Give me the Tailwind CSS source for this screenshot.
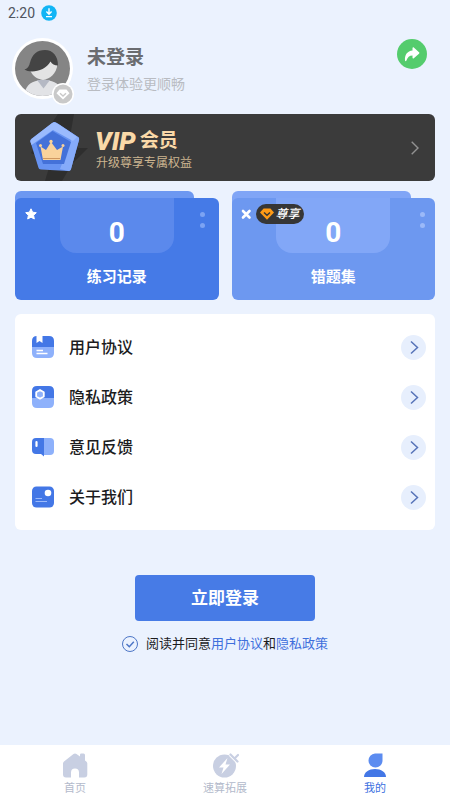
<!DOCTYPE html>
<html lang="zh-CN">
<head>
<meta charset="utf-8">
<meta name="viewport" content="width=device-width, initial-scale=1">
<title>我的</title>
<script src="https://cdn.jsdelivr.net/npm/@tailwindcss/browser@4"></script>
</head>
<body class="flex min-h-screen flex-col bg-[#ebf2fe] font-['Roboto','Noto_Sans_CJK_SC',sans-serif] text-[#1c1c1e]">

<div class="flex h-[26px] items-center gap-1.5 px-2 text-sm text-[#50555e]">
  <span>2:20</span>
  <svg class="size-4" viewBox="0 0 16 16" aria-hidden="true"><circle cx="8" cy="8" r="7.8" fill="#12b5f5"/><path d="M8 3.200v5.600M5.400 6.600 8 9.200l2.600-2.600M5 11.600h6" fill="none" stroke="#fff" stroke-width="1.400"/></svg>
</div>

<main class="flex flex-1 flex-col px-[15px]">
  <header class="flex items-start pt-3">
    <div class="relative -ml-[3px] size-[61px] shrink-0">
      <svg class="size-full" viewBox="0 0 61 61" role="img" aria-label="头像">
        <defs><clipPath id="face"><circle cx="30.500" cy="30.500" r="27.500"/></clipPath></defs>
        <circle cx="30.500" cy="30.500" r="30.500" fill="#fff"/>
        <g clip-path="url(#face)">
          <rect width="61" height="61" fill="#858585"/>
          <path d="M12 61c0-11 5-17 14-18.500l5-1.500 6 1.500C46 44 51 50 51 61z" fill="#e2e3e6"/>
          <path d="M25 42h13l-6.500 8.500z" fill="#b5b9c4"/>
          <path d="M17 29c2 8 7.500 12.500 14 12.500S44.500 36 45.500 26l-8-7-18 3z" fill="#e3e3e3"/>
          <path d="M12.500 31.500c3.500-1 4.500-3.500 5.500-7 2-8 7-12.500 15-12.500s13 6 13 15.500c-3.500 0-6-1.500-7.500-4C35 30 27 33.500 20 33.500c-3 0-6-.8-7.500-2z" fill="#444"/>
        </g>
      </svg>
      <svg class="absolute -right-px -bottom-1.5 size-[22px]" viewBox="0 0 22 22" aria-hidden="true"><circle cx="11" cy="11" r="11" fill="#fff"/><circle cx="11" cy="11" r="9.500" fill="#c9c9c9"/><path d="M7.500 6.500h7l3 3.700-6.500 6.300-6.500-6.300z" fill="#fff"/><path d="m8 10.300 3 2.700 3-2.700" fill="none" stroke="#c9c9c9" stroke-width="1.400"/></svg>
    </div>
    <div class="ml-3.5 flex-1 pt-1.5">
      <h1 class="text-[19px] leading-7 font-bold text-[#6a6c70]">未登录</h1>
      <p class="text-sm leading-6 text-[#b9bcc2]">登录体验更顺畅</p>
    </div>
    <button type="button" aria-label="分享" class="mt-px mr-2 size-[30px] rounded-full bg-[#54cc6d]">
      <svg class="size-full" viewBox="0 0 30 30" aria-hidden="true"><path d="M15.500 9.200c0-.8.700-1.100 1.300-.6l5.200 4.700c.5.400.5 1 0 1.400l-5.200 4.600c-.6.500-1.300.2-1.300-.6v-2.200c-3.300 0-4.800 1.800-6.200 5.300-.3.600-1.200.5-1.300-.2-.5-5.500 2.300-9.600 7.500-10z" fill="#fff"/></svg>
    </button>
  </header>

  <a href="#vip" class="mt-[15px] flex h-[67px] items-center overflow-hidden rounded-md bg-[#3b3b3b]">
    <svg class="h-[67px] w-20 shrink-0" viewBox="0 0 80 67" aria-hidden="true">
      <path d="M43 0h16l-6 34h20L57 50 47 67H30l6-20-20-8z" fill="#2e2e2e"/>
      <path d="M38 8.500c1-.7 2.500-.6 3.500.2L63 23c1 .7 1.400 1.900 1 3l-8 29c-.4 1.400-1.400 2-2.700 2L26 55.500c-1.400 0-2.300-.8-2.600-2L15.500 28c-.4-1.300 0-2.400 1-3.200z" fill="#6793f2"/>
      <path d="M42 9 63 23c1 .7 1.400 1.900 1 3l-8 29c-.4 1.400-1.400 2-2.700 2L45 55l11-29z" fill="#86abfa"/>
      <path d="M37 9 16.500 25c-1 .8-1.400 1.900-1 3l1 3L38 16l20 11 4-4L41.500 9c-1.500-1-3.200-1-4.500 0z" fill="#9abafd"/>
      <path d="M37.500 17 56 28l-7 22H28l-7-21z" fill="#4471d9"/>
      <path d="m25.500 32.500 5.500 3.500 5-8 6 8 6-3.500-2.500 13.500H28z" fill="#f9d29b"/>
      <circle cx="25.500" cy="31.500" r="1.500" fill="#f9d29b"/><circle cx="36" cy="27.500" r="1.700" fill="#f9d29b"/><circle cx="48" cy="31.500" r="1.500" fill="#f9d29b"/>
      <path d="M28 44.500h17" stroke="#cf9760" stroke-width="1"/>
    </svg>
    <div class="flex-1 pt-1.5">
      <p class="flex items-center gap-1 text-[#fad9a8]"><span class="text-[26px] leading-6 font-black italic">VIP</span><span class="text-[19px] leading-6 font-bold">会员</span></p>
      <p class="pl-px text-xs leading-5 text-[#ccb590]">升级尊享专属权益</p>
    </div>
    <svg class="mr-4 h-3.5 w-2" viewBox="0 0 8 14" fill="none" stroke="#929292" stroke-width="1.400" aria-hidden="true"><path d="m.7.700 6.300 6.300-6.300 6.300"/></svg>
  </a>

  <section class="mt-2.5 grid grid-cols-2 gap-[13px] text-white">
    <a href="#records" class="block">
      <div class="h-3.5 w-[88%] rounded-t-md bg-[#6d98f1]"></div>
      <div class="relative -mt-[7px] flex h-[102px] flex-col items-center rounded-md bg-[#457ae7]">
        <div class="flex h-[55px] w-[56%] items-center justify-center rounded-b-2xl bg-[#5b89ec] pt-3.5 text-[28px] leading-8 font-bold">0</div>
        <p class="mt-3 text-[15px] leading-6 font-bold">练习记录</p>
        <svg class="absolute top-2.5 left-2.5 size-3" viewBox="0 0 12 12" aria-hidden="true"><path d="m6 .8 1.600 3.400 3.700.5-2.700 2.600.7 3.700L6 9.200 2.700 11l.7-3.700L.7 4.700l3.700-.5z" fill="#fff" stroke="#fff" stroke-linejoin="round"/></svg>
        <div class="absolute top-3.5 right-3.5 flex flex-col gap-1.5"><i class="size-[5px] rounded-full bg-[#7ca3f3]"></i><i class="size-[5px] rounded-full bg-[#7ca3f3]"></i></div>
      </div>
    </a>
    <a href="#mistakes" class="block">
      <div class="h-3.5 w-[88%] rounded-t-md bg-[#80a5f6]"></div>
      <div class="relative -mt-[7px] flex h-[102px] flex-col items-center rounded-md bg-[#6d98f0]">
        <div class="flex h-[55px] w-[56%] items-center justify-center rounded-b-2xl bg-[#82a7f7] pt-3.5 text-[28px] leading-8 font-bold">0</div>
        <p class="mt-3 text-[15px] leading-6 font-bold">错题集</p>
        <div class="absolute top-1.5 left-2 flex items-center gap-1">
          <svg class="size-3" viewBox="0 0 12 12" aria-hidden="true"><path d="m3 3 6.500 6.500M9.500 3 3 9.500" stroke="#fff" stroke-width="2.600" stroke-linecap="round"/></svg>
          <span class="flex h-5 items-center gap-0.5 rounded-full bg-[#363636] px-1 text-xs leading-5 font-medium italic">
            <svg class="h-3 w-3.5" viewBox="0 0 14 12" aria-hidden="true"><path d="M3.600.5h6.800L14 4.600 7 11.700 0 4.600z" fill="#ff9b16"/><path d="M4 4.500 7 7.300l3-2.800" fill="none" stroke="#363636" stroke-width="1.500"/></svg>尊享
          </span>
        </div>
        <div class="absolute top-3.5 right-2.5 flex flex-col gap-1.5"><i class="size-[5px] rounded-full bg-[#9bb9f8]"></i><i class="size-[5px] rounded-full bg-[#9bb9f8]"></i></div>
      </div>
    </a>
  </section>

  <nav class="mt-3.5 rounded-md bg-white py-2 pr-[9px] pl-4 text-base font-medium" aria-label="设置">
    <a href="#terms" class="flex h-[50px] items-center">
      <svg class="size-6" viewBox="0 0 24 24" aria-hidden="true"><path d="M1 12h22v6q0 5-5 5H6q-5 0-5-5z" fill="#8eb1fb"/><path d="M1 12V6q0-5 5-5h12q5 0 5 5v6z" fill="#4377e6"/><path d="M5.500 1h6v7l-3-2-3 2z" fill="#fff"/><path d="M5.500 15.500H12M5.500 18.500h11" stroke="#fff" stroke-width="1.300"/></svg>
      <span class="ml-3.5 flex-1 pt-0.5">用户协议</span>
      <svg class="size-[25px]" viewBox="0 0 25 25" aria-hidden="true"><circle cx="12.500" cy="12.500" r="12.500" fill="#e7effd"/><path d="m10 6.500 6.500 6-6.500 6" fill="none" stroke="#5673b8" stroke-width="1.500"/></svg>
    </a>
    <a href="#privacy" class="flex h-[50px] items-center">
      <svg class="size-6" viewBox="0 0 24 24" aria-hidden="true"><path d="M1 12h22v6q0 5-5 5H6q-5 0-5-5z" fill="#8eb1fb"/><path d="M1 13V6q0-5 5-5h12q5 0 5 5v7z" fill="#4377e6"/><path d="m9 5 3.800 2.200v4.300L9 13.700l-3.800-2.200V7.200z" fill="#8eb1fb" stroke="#fff" stroke-width="1.800" stroke-linejoin="round"/></svg>
      <span class="ml-3.5 flex-1 pt-0.5">隐私政策</span>
      <svg class="size-[25px]" viewBox="0 0 25 25" aria-hidden="true"><circle cx="12.500" cy="12.500" r="12.500" fill="#e7effd"/><path d="m10 6.500 6.500 6-6.500 6" fill="none" stroke="#5673b8" stroke-width="1.500"/></svg>
    </a>
    <a href="#feedback" class="flex h-[50px] items-center">
      <svg class="size-6" viewBox="0 0 24 24" aria-hidden="true"><path d="M12.500 3H19q4 0 4 4v9q0 4-4 4h-6.500z" fill="#8eb1fb"/><path d="M13 3H5Q1 3 1 7v8q0 4 4 4h5l3 2.500z" fill="#4377e6"/><path d="M5.500 7v4" stroke="#fff" stroke-width="2.200" stroke-linecap="round"/></svg>
      <span class="ml-3.5 flex-1 pt-0.5">意见反馈</span>
      <svg class="size-[25px]" viewBox="0 0 25 25" aria-hidden="true"><circle cx="12.500" cy="12.500" r="12.500" fill="#e7effd"/><path d="m10 6.500 6.500 6-6.500 6" fill="none" stroke="#5673b8" stroke-width="1.500"/></svg>
    </a>
    <a href="#about" class="flex h-[50px] items-center">
      <svg class="size-6" viewBox="0 0 24 24" aria-hidden="true"><rect x="1" y="1.500" width="22" height="21" rx="4.500" fill="#4377e6"/><circle cx="17" cy="8" r="3.300" fill="#fff"/><path d="M4.500 13.500H11M4.500 16.500H16" stroke="#9cbafa" stroke-width="1.200"/></svg>
      <span class="ml-3.5 flex-1 pt-0.5">关于我们</span>
      <svg class="size-[25px]" viewBox="0 0 25 25" aria-hidden="true"><circle cx="12.500" cy="12.500" r="12.500" fill="#e7effd"/><path d="m10 6.500 6.500 6-6.500 6" fill="none" stroke="#5673b8" stroke-width="1.500"/></svg>
    </a>
  </nav>

  <button type="button" class="mt-[45px] h-[46px] w-[180px] self-center rounded bg-[#477be6] pt-0.5 text-[17px] font-bold text-white">立即登录</button>

  <div class="mt-[11px] flex items-center justify-center gap-2 text-[13px] leading-6">
    <span class="grid size-4 place-items-center">
      <input id="agree" type="checkbox" checked class="peer col-start-1 row-start-1 size-4 appearance-none rounded-full border border-[#4d76c6]">
      <svg class="pointer-events-none invisible col-start-1 row-start-1 size-4 peer-checked:visible" viewBox="0 0 16 16" fill="none" stroke="#4d76c6" stroke-width="1.500" aria-hidden="true"><path d="m4.500 8 2.800 2.700 4.500-4.900"/></svg>
    </span>
    <p><label for="agree">阅读并同意</label><a href="#terms" class="text-[#3e6fdc]">用户协议</a>和<a href="#privacy" class="text-[#3e6fdc]">隐私政策</a></p>
  </div>
</main>

<nav class="grid h-[55px] grid-cols-3 bg-white text-[11px] leading-4 text-[#b3bacb]" aria-label="主导航">
  <a href="#home" class="flex flex-col items-center gap-[3px] pt-[7px]">
    <svg class="h-[26px] w-7" viewBox="0 0 28 26" aria-hidden="true"><path d="M12.500 2Q14 .9 15.500 2l3.500 2.500V2.800q0-1.300 1.300-1.300h2.200q1.500 0 1.500 1.500v5.500l1.300 1q1 .8 1 2v11q0 3-3 3H18v-5q0-4-4-4t-4 4v5H5q-3 0-3-3v-11q0-1.200 1-2z" fill="#c8cfe2"/></svg>
    首页
  </a>
  <a href="#practice" class="flex flex-col items-center gap-[3px] pt-[7px]">
    <svg class="h-[26px] w-7" viewBox="0 0 28 26" aria-hidden="true"><circle cx="13.500" cy="14" r="11.500" fill="#c8cfe2"/><path d="m18.500 3.500 7 7" stroke="#fff" stroke-width="1.200"/><path d="m19.500 2.500 7 7" stroke="#c8cfe2" stroke-width="2.200" stroke-linecap="round"/><path d="m24 6 3-3" stroke="#c8cfe2" stroke-width="2.200" stroke-linecap="round"/><path d="m16.500 6-8.500 9.500h4.500L10.500 22l8.500-9.500h-4.500z" fill="#fff"/></svg>
    速算拓展
  </a>
  <a href="#mine" aria-current="page" class="flex flex-col items-center gap-[3px] pt-[7px] text-[#3b6fdf]">
    <svg class="h-[26px] w-7" viewBox="0 0 28 26" aria-hidden="true"><path d="M14 1.500h7.500v7.500A7 7 0 1 1 14 1.500z" fill="#5c8cf0"/><path d="M3 25c0-5 5-8 11-8s11 3 11 8z" fill="#4377e6"/></svg>
    我的
  </a>
</nav>
</body>
</html>
